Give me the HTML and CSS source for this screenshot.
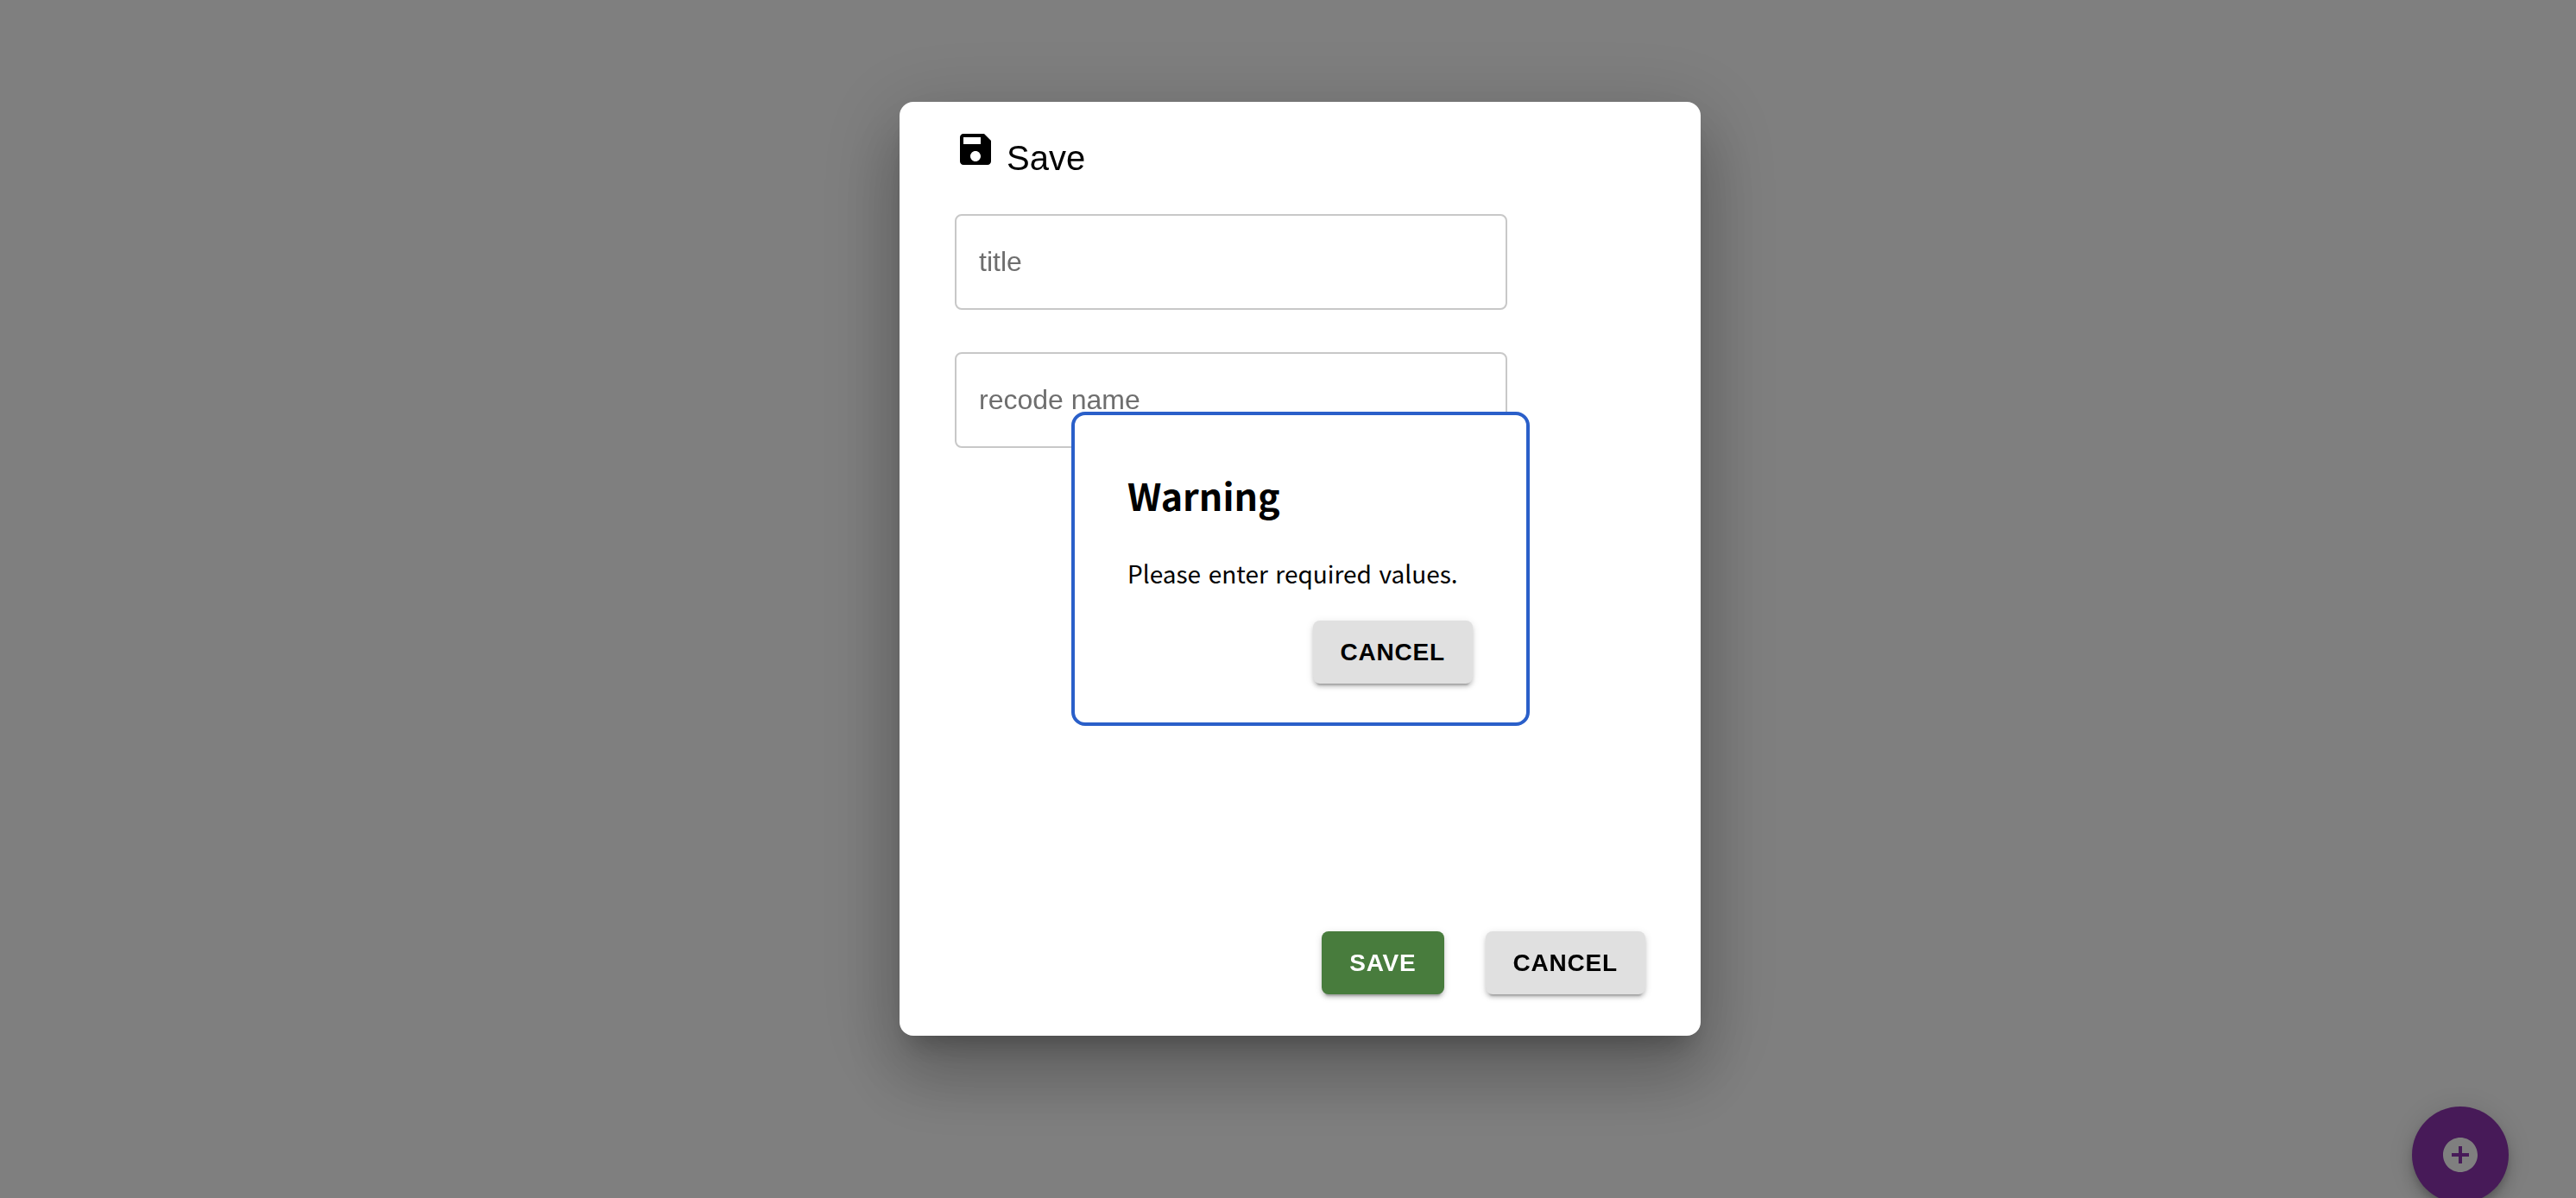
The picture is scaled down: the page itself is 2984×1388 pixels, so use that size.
FILE: index.html
```html
<!DOCTYPE html>
<html lang="en">
<head>
    <meta charset="UTF-8">
    <title>Save</title>
    <link rel="stylesheet" href="styles.css">
</head>
<body>
    <button class="fab" aria-label="Add">
        <svg viewBox="0 0 24 24" width="48" height="48"><path d="M12 2C6.48 2 2 6.48 2 12s4.48 10 10 10 10-4.48 10-10S17.52 2 12 2zm5 11h-4v4h-2v-4H7v-2h4V7h2v4h4v2z"/></svg>
    </button>
    <div class="overlay">
        <div class="modal">
            <div class="modal-title">
                <svg viewBox="0 0 24 24" width="48" height="48"><path d="M17 3H5c-1.11 0-2 .9-2 2v14c0 1.1.89 2 2 2h14c1.1 0 2-.9 2-2V7l-4-4zm-5 16c-1.66 0-3-1.34-3-3s1.34-3 3-3 3 1.34 3 3-1.34 3-3 3zm3-10H5V5h10v4z"/></svg>
                <span>Save</span>
            </div>
            <div class="fields">
                <input class="field" type="text" placeholder="title">
                <input class="field" type="text" placeholder="recode name">
            </div>
            <div class="modal-actions">
                <button class="btn btn-save">Save</button>
                <button class="btn btn-cancel">Cancel</button>
            </div>
            <div class="warning">
                <h2>Warning</h2>
                <p>Please enter required values.</p>
                <div class="warning-actions">
                    <button class="btn btn-cancel">Cancel</button>
                </div>
            </div>
        </div>
    </div>
</body>
</html>
```

FILE: styles.css
```css
html, body {
    height: 100%;
}
body {
    margin: 0;
    overflow: hidden;
    background-color: #fff;
    font-family: "Liberation Sans", Arial, sans-serif;
}
.fab {
    position: fixed;
    right: 78px;
    bottom: -6px;
    width: 112px;
    height: 112px;
    padding: 0;
    border: none;
    border-radius: 50%;
    background-color: #8e35b0;
    display: flex;
    align-items: center;
    justify-content: center;
    box-shadow: 0 6px 10px -2px rgba(0, 0, 0, 0.2), 0 12px 20px 0 rgba(0, 0, 0, 0.14), 0 2px 36px 0 rgba(0, 0, 0, 0.12);
}
.fab svg {
    fill: #fff;
}
.overlay {
    position: fixed;
    top: 0;
    left: 0;
    right: 0;
    bottom: 0;
    background-color: rgba(0, 0, 0, 0.5);
    padding: 118px 0 0 1042px;
    box-sizing: border-box;
}
.modal {
    position: relative;
    width: 928px;
    height: 1082px;
    box-sizing: border-box;
    padding: 0 64px 48px;
    background-color: #fff;
    border-radius: 16px;
    display: flex;
    flex-direction: column;
    box-shadow: 0 22px 30px -14px rgba(0, 0, 0, 0.24), 0 48px 76px 6px rgba(0, 0, 0, 0.17), 0 18px 92px 16px rgba(0, 0, 0, 0.14);
}
.modal-title {
    display: flex;
    align-items: baseline;
    gap: 12px;
    padding-top: 31px;
    font-size: 40px;
    color: #000;
}
.modal-title svg {
    fill: #000;
    flex: none;
}
.fields {
    display: flex;
    flex-direction: column;
    gap: 49px;
    margin-top: 42px;
}
.field {
    width: 640px;
    height: 111px;
    box-sizing: border-box;
    padding: 0 26px;
    border: 2px solid #c8c8c8;
    border-radius: 8px;
    background-color: #fff;
    font-family: "Liberation Sans", Arial, sans-serif;
    font-size: 32px;
    outline: none;
}
.field::placeholder {
    color: #6e6e6e;
    opacity: 1;
}
.modal-actions {
    display: flex;
    justify-content: flex-end;
    gap: 48px;
    margin-top: auto;
}
.btn {
    height: 73px;
    padding: 0 32px;
    border: none;
    border-radius: 8px;
    font-family: "Liberation Sans", Arial, sans-serif;
    font-size: 28px;
    font-weight: bold;
    letter-spacing: 0.8px;
    text-transform: uppercase;
    box-shadow: 0 6px 2px -4px rgba(0, 0, 0, 0.2), 0 4px 4px 0 rgba(0, 0, 0, 0.14), 0 2px 10px 0 rgba(0, 0, 0, 0.12);
}
.btn-save {
    background-color: #487c3d;
    color: #fff;
}
.btn-cancel {
    background-color: #e0e0e0;
    color: #000;
}
.warning {
    position: absolute;
    left: 199px;
    top: 359px;
    width: 531px;
    height: 364px;
    box-sizing: border-box;
    padding: 60px 62px 0 61px;
    background-color: #fff;
    border: 4px solid #2a5fc9;
    border-radius: 16px;
    font-family: "Noto Sans CJK KR", "Noto Sans", sans-serif;
    color: #000;
}
.warning h2 {
    margin: 0;
    font-size: 43px;
    line-height: 64px;
    font-weight: bold;
}
.warning p {
    margin: 37px 0 0;
    font-size: 28px;
    line-height: 44px;
    word-spacing: 2.3px;
    white-space: nowrap;
}
.warning-actions {
    display: flex;
    justify-content: flex-end;
    margin-top: 33px;
}
```
